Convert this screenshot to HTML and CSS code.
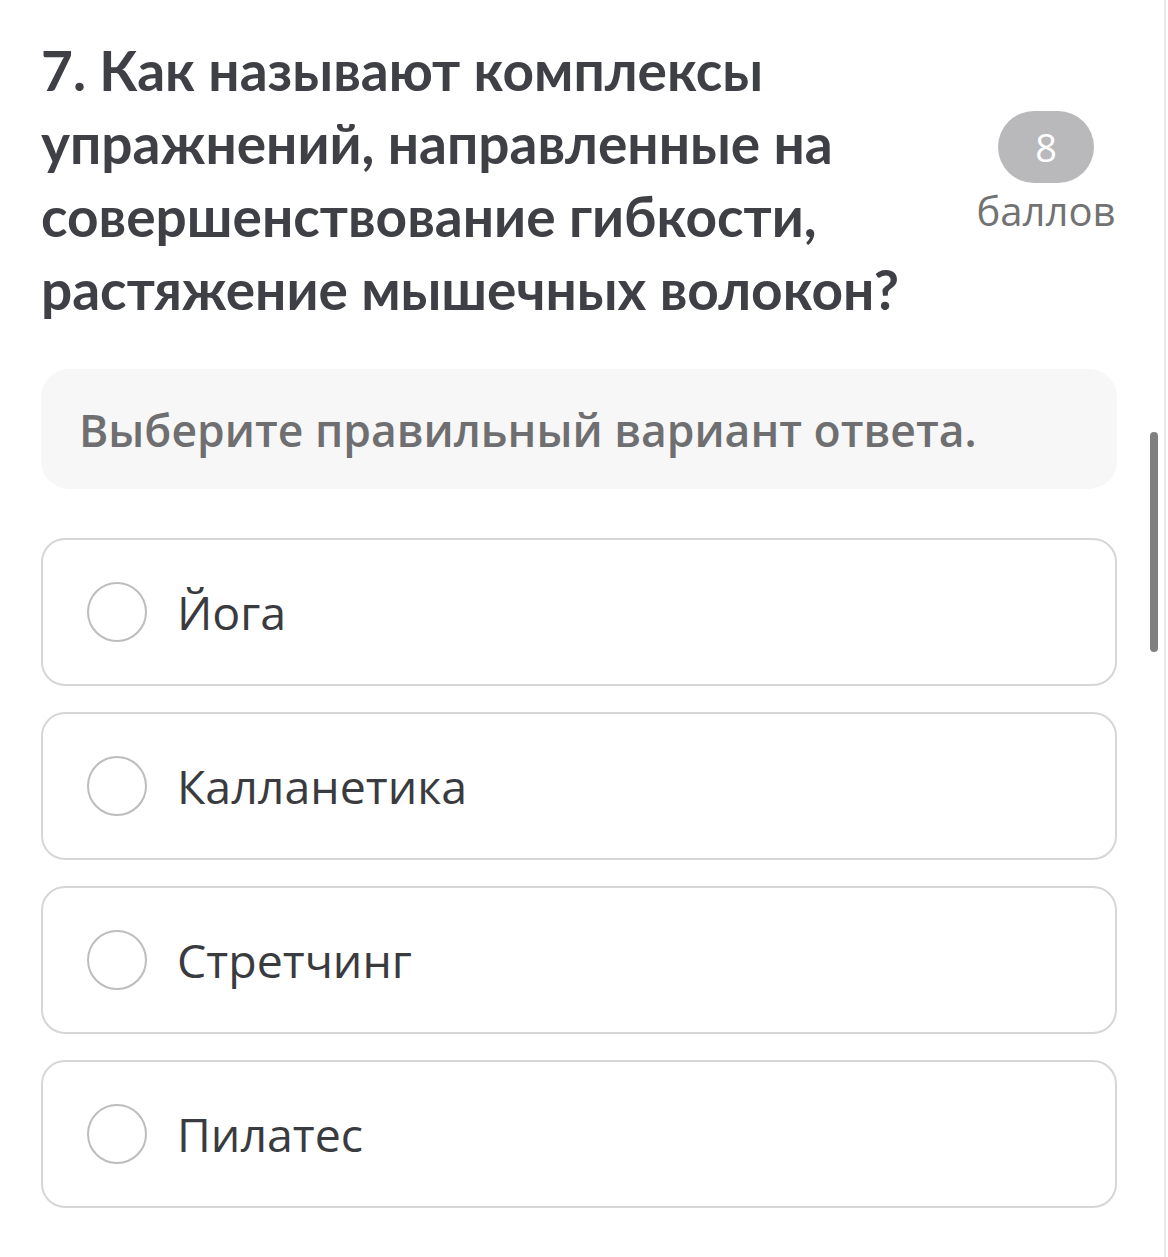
FILE: index.html
```html
<!DOCTYPE html>
<html lang="ru">
<head>
    <meta charset="UTF-8">
    <title>Вопрос 7</title>
    <link rel="stylesheet" href="styles.css">
</head>
<body>
    <div class="page">
        <div class="question-head">
            <h1 class="question-title">7. Как называют комплексы упражнений, направленные на совершенствование гибкости, растяжение мышечных волокон?</h1>
            <div class="score">
                <span class="score-badge">8</span>
                <span class="score-label">баллов</span>
            </div>
        </div>

        <div class="hint">Выберите правильный вариант ответа.</div>

        <div class="options">
            <label class="option">
                <span class="radio"></span>
                <span class="option-text">Йога</span>
            </label>
            <label class="option">
                <span class="radio"></span>
                <span class="option-text">Калланетика</span>
            </label>
            <label class="option">
                <span class="radio"></span>
                <span class="option-text">Стретчинг</span>
            </label>
            <label class="option">
                <span class="radio"></span>
                <span class="option-text">Пилатес</span>
            </label>
        </div>
    </div>
    <div class="scroll-track"><div class="scroll-thumb"></div></div>
</body>
</html>
```

FILE: styles.css
```css
body {
    margin: 0;
    font-family: "Open Sans", Arial, sans-serif;
    background-color: #ffffff;
    color: #3f4045;
}
.page {
    width: 1076px;
    padding: 34px 0 0 41px;
}
.question-head {
    display: flex;
    align-items: flex-start;
}
.question-title {
    flex: 1;
    margin: 0;
    font-family: Lato, "Open Sans", sans-serif;
    font-size: 55px;
    font-weight: 700;
    line-height: 73px;
    color: #3f4045;
    padding-right: 16px;
}
.score {
    width: 150px;
    margin-right: -4px;
    display: flex;
    flex-direction: column;
    align-items: center;
    padding-top: 77px;
}
.score-badge {
    width: 96px;
    height: 72px;
    border-radius: 36px;
    background-color: #b9b9bb;
    color: #ffffff;
    font-size: 38px;
    line-height: 72px;
    text-align: center;
}
.score-label {
    margin-top: 4px;
    font-size: 40px;
    line-height: 48px;
    color: #727272;
}
.hint {
    margin-top: 43px;
    height: 120px;
    box-sizing: border-box;
    padding: 0 0 0 38px;
    display: flex;
    align-items: center;
    background-color: #f7f7f7;
    border-radius: 28px;
    font-size: 44.5px;
    font-weight: 600;
    color: #6f6f71;
}
.options {
    margin-top: 49px;
    display: flex;
    flex-direction: column;
    gap: 26px;
}
.option {
    height: 148px;
    box-sizing: border-box;
    border: 2px solid #d6d6d6;
    border-radius: 24px;
    display: flex;
    align-items: center;
    padding-left: 44px;
    gap: 30px;
}
.radio {
    width: 60px;
    height: 60px;
    box-sizing: border-box;
    border: 2px solid #bdbdbd;
    border-radius: 50%;
}
.option-text {
    font-size: 46.5px;
    color: #3a3b3f;
}
.scroll-track {
    position: fixed;
    top: 0;
    right: 0;
    width: 2px;
    height: 100%;
    border-left: 2px solid #e9e9e9;
}
.scroll-thumb {
    position: fixed;
    top: 432px;
    right: 10px;
    width: 8px;
    height: 220px;
    border-radius: 4px;
    background-color: #808080;
}
```
